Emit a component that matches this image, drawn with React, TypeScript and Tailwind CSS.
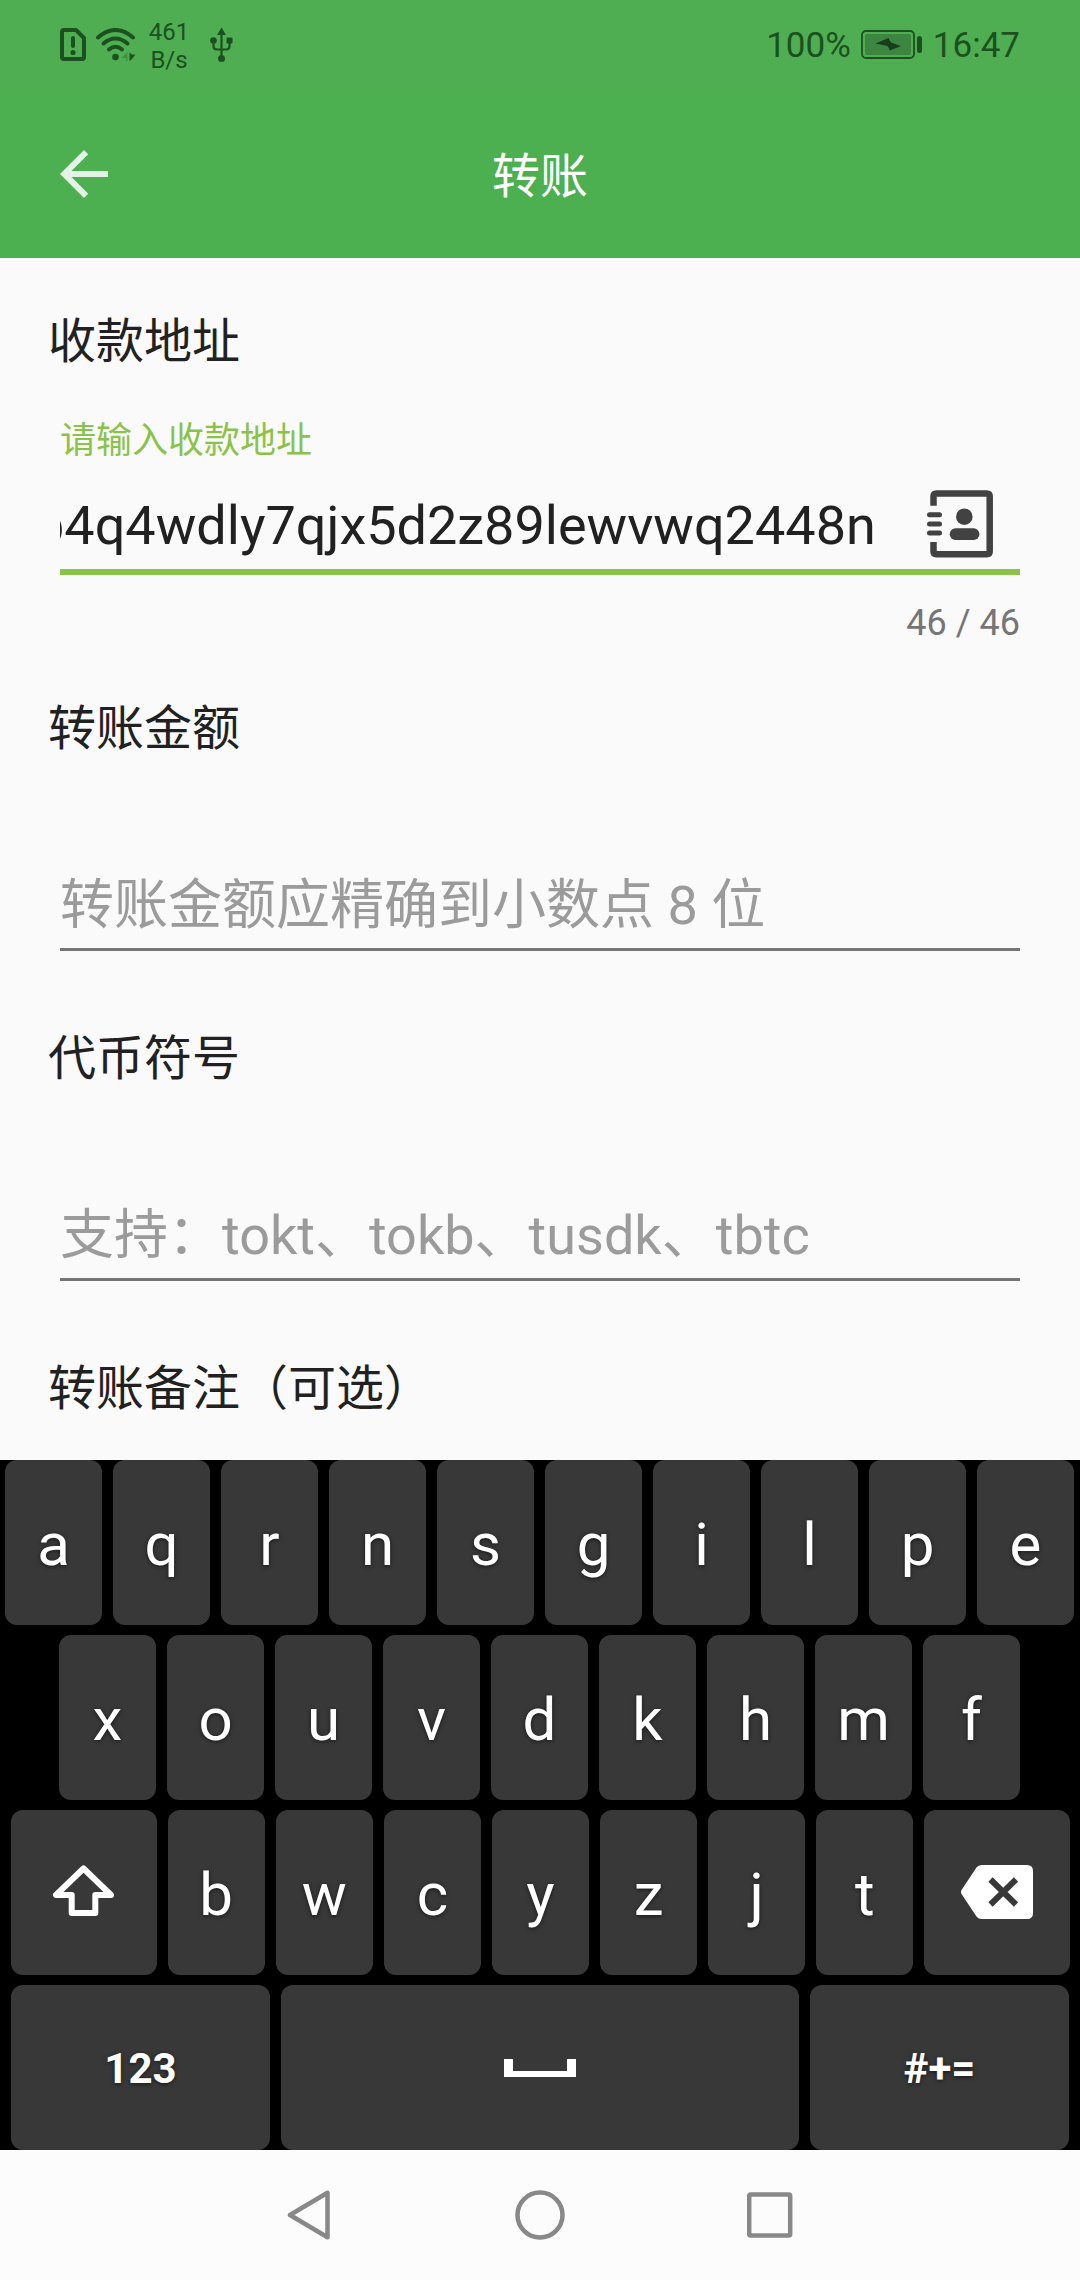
import { useLayoutEffect, useRef } from "react";
import type { ReactNode } from "react";

const fieldText =
  "h-[84px] min-w-0 flex-1 bg-transparent text-[54px] leading-[84px] text-[#212121] outline-none placeholder:text-[#9b9b9b] placeholder:opacity-100";

function StatusBar() {
  return (
    <div className="flex h-[90px] items-center justify-between bg-[#4fae52] px-[60px] text-[#1c511f]">
      <div className="flex items-center">
        <svg className="h-[34px] w-[26px]" viewBox="0 0 26 34" aria-hidden="true">
          <path d="M4 2H16L24 10V29Q24 31 22 31H4Q2 31 2 29V4Q2 2 4 2Z" fill="none" stroke="currentColor" strokeWidth="4" strokeLinejoin="round" />
          <path d="M13 10V18" stroke="currentColor" strokeWidth="4" strokeLinecap="round" />
          <circle cx="13" cy="24.500" r="2.600" fill="currentColor" />
        </svg>
        <svg className="ml-[10px] h-[34px] w-[40px]" viewBox="0 0 40 34" aria-hidden="true">
          <g fill="none" stroke="currentColor" strokeWidth="4" strokeLinecap="round">
            <path d="M2 9.500Q19.500 -5.500 37 9.500" />
            <path d="M7.500 15.500Q19.500 5.500 31.500 15.500" />
            <path d="M13 21.500Q19.500 16 26 21.500" />
          </g>
          <circle cx="19.500" cy="29" r="3.300" fill="currentColor" />
          <path d="M31.500 24V33H30V30H25.500Z" fill="#3a9140" />
          <path d="M33.500 24L35.500 26.500H39.500L35.500 31.500L33.500 33Z" fill="currentColor" />
        </svg>
        <div className="ml-[12px] w-[42px] pt-[2px] text-center text-[24px] leading-[28px]">
          461
          <br />
          B/s
        </div>
        <svg className="ml-[20px] h-[36px] w-[23px]" viewBox="0 0 23 36" aria-hidden="true">
          <g fill="none" stroke="currentColor" strokeWidth="2.200">
            <path d="M11.500 6V32M3.500 13V19Q3.500 22.500 7 22.500H16Q19.500 22.500 19.500 19V13" />
          </g>
          <path d="M11.500 0.500L16 8H7Z" fill="currentColor" />
          <circle cx="3.500" cy="13.500" r="3.300" fill="currentColor" />
          <rect x="16.500" y="10.500" width="6" height="6" rx="1" fill="currentColor" />
          <circle cx="11.500" cy="31.500" r="3.500" fill="currentColor" />
        </svg>
      </div>
      <div className="flex items-center text-[35px] leading-[42px]">
        <span className="pt-[2px]">100%</span>
        <svg className="mx-[10px] h-[30px] w-[62px]" viewBox="0 0 62 30" aria-hidden="true">
          <rect x="1" y="1" width="52" height="27" rx="4" fill="none" stroke="currentColor" strokeWidth="1.800" />
          <rect x="4" y="4" width="46" height="21" rx="2" fill="#3d8641" />
          <path d="M14.500 13.500L27.500 8L30 12.500L40 16L29 20.500L26.500 16Z" fill="#173f19" />
          <rect x="56" y="6" width="5" height="17" rx="2.500" fill="currentColor" />
        </svg>
        <span className="pt-[2px]">16:47</span>
      </div>
    </div>
  );
}

function Toolbar() {
  return (
    <div className="grid h-[168px] grid-cols-[72px_1fr_72px] items-center px-12">
      <button type="button" aria-label="返回" className="text-[#e4f3e5]">
        <svg className="size-[72px]" viewBox="0 0 24 24" fill="currentColor" aria-hidden="true">
          <path d="M20 11H7.830l5.590-5.590L12 4l-8 8 8 8 1.410-1.410L7.830 13H20v-2z" />
        </svg>
      </button>
      <h1 className="pt-[6px] text-center text-[48px] leading-[72px] text-white">转账</h1>
    </div>
  );
}

function AddressBookIcon() {
  return (
    <svg className="h-[68px] w-[67px]" viewBox="0 0 67 68" aria-hidden="true">
      <path
        d="M6.500 15.700V6.500Q6.500 3.500 9.500 3.500H59.700Q62.700 3.500 62.700 6.500V61.300Q62.700 64.300 59.700 64.300H9.500Q6.500 64.300 6.500 61.300V52"
        fill="none"
        stroke="#424242"
        strokeWidth="6.500"
      />
      <path d="M2.500 24.700H12.500M2.500 34H12.500M2.500 43H12.500" stroke="#424242" strokeWidth="5" strokeLinecap="round" />
      <circle cx="37.300" cy="26.700" r="8.300" fill="#424242" />
      <rect x="22.700" y="38.300" width="29.700" height="11.700" rx="5.800" fill="#424242" />
    </svg>
  );
}

function AddressField() {
  const ref = useRef<HTMLInputElement>(null);
  // Keep the end of a long address in view.
  useLayoutEffect(() => {
    const el = ref.current;
    if (el) el.scrollLeft = el.scrollWidth;
  }, []);
  return (
    <div className="px-3">
      <label htmlFor="address" className="mt-9 block text-[36px] leading-[54px] text-[#8bc34a]">
        请输入收款地址
      </label>
      <div className="mt-[17px] flex items-center border-b-[6px] border-[#8bc34a] pr-[26px]">
        <input id="address" ref={ref} type="text" defaultValue="p4q4wdly7qjx5d2z89lewvwq2448n" className={`${fieldText} pb-[2px]`} />
        <button type="button" aria-label="地址簿" className="mb-[6px] ml-[51px] shrink-0">
          <AddressBookIcon />
        </button>
      </div>
      <div className="mt-6 text-right text-[36px] leading-[48px] text-[#757575]">46 / 46</div>
    </div>
  );
}

function PlainField({ id, placeholder }: { id: string; placeholder: string }) {
  return (
    <div className="mx-3 mt-[99px] mb-[72px] flex border-b-[3px] border-[#757575]">
      <input id={id} type="text" placeholder={placeholder} className={fieldText} />
    </div>
  );
}

function Heading({ htmlFor, children }: { htmlFor?: string; children: ReactNode }) {
  return (
    <label htmlFor={htmlFor} className="block text-[48px] leading-[72px] text-[#212121]">
      {children}
    </label>
  );
}

const keyBase =
  "flex h-[165px] min-w-0 items-center justify-center rounded-[12px] bg-[#383838] text-white [text-shadow:0_1px_4px_rgba(0,0,0,0.6)]";

function Letters({ keys }: { keys: string }) {
  return keys.split("").map((k) => (
    <button key={k} type="button" className={`${keyBase} flex-1 pt-1 text-[60px] leading-[70px]`}>
      {k}
    </button>
  ));
}

function Keyboard() {
  return (
    <div className="flex flex-col gap-[10px] bg-black">
      <div className="flex gap-[11px] pr-[6px] pl-[5px]">
        <Letters keys="aqrnsgilpe" />
      </div>
      <div className="flex gap-[11px] pr-[60px] pl-[59px]">
        <Letters keys="xouvdkhmf" />
      </div>
      <div className="flex gap-[11px] pr-[10px] pl-[11px]">
        <button type="button" aria-label="Shift" className={`${keyBase} flex-[1.5]`}>
          <svg className="mb-[5px] h-[53px] w-[63px]" viewBox="0 0 63 53" aria-hidden="true">
            <path d="M31.500 4.500L4 31H19.700V49H43.300V31H59Z" fill="none" stroke="white" strokeWidth="6" strokeLinejoin="round" />
          </svg>
        </button>
        <Letters keys="bwcyzjt" />
        <button type="button" aria-label="Backspace" className={`${keyBase} flex-[1.5]`}>
          <svg className="mb-[2px] h-[54px] w-[72px]" viewBox="0 0 72 54" aria-hidden="true">
            <path d="M20.500 0H66Q72 0 72 6V48Q72 54 66 54H20.500Q17.500 54 15.500 51.500L0.500 29Q-0.500 27 0.500 25L15.500 2.500Q17.500 0 20.500 0Z" fill="white" />
            <path d="M29.500 14.500L55 39.500M55 14.500L29.500 39.500" stroke="#383838" strokeWidth="6" />
          </svg>
        </button>
      </div>
      <div className="flex gap-[11px] px-[11px]">
        <button type="button" className={`${keyBase} flex-1 pt-[2px] text-[42px] font-bold`}>
          123
        </button>
        <button type="button" aria-label="Space" className={`${keyBase} flex-[2]`}>
          <svg className="h-[18px] w-[72px]" viewBox="0 0 72 18" aria-hidden="true">
            <path d="M0 0H9V12H63V0H72V18H0Z" fill="white" />
          </svg>
        </button>
        <button type="button" className={`${keyBase} flex-1 pt-[2px] text-[42px] font-bold`}>
          #+=
        </button>
      </div>
    </div>
  );
}

function NavBar() {
  return (
    <nav className="flex h-[130px] items-center justify-center gap-[182px] bg-[#fcfcfc]">
      <button type="button" aria-label="Back">
        <svg className="size-[50px]" viewBox="0 0 50 50" fill="none" stroke="#888" strokeWidth="4.500" strokeLinejoin="round" aria-hidden="true">
          <path d="M44.500 2.800V47.200L7 25Z" />
        </svg>
      </button>
      <button type="button" aria-label="Home">
        <svg className="size-[50px]" viewBox="0 0 50 50" fill="none" stroke="#888" strokeWidth="4.500" aria-hidden="true">
          <circle cx="25" cy="25" r="22.500" />
        </svg>
      </button>
      <button type="button" aria-label="Recents">
        <svg className="size-[50px]" viewBox="0 0 50 50" fill="none" stroke="#888" strokeWidth="4.500" aria-hidden="true">
          <rect x="2.200" y="4.500" width="41" height="41" rx="1.500" />
        </svg>
      </button>
    </nav>
  );
}

export default function App() {
  return (
    <div className="flex min-h-screen flex-col bg-[#fafafa] font-['Roboto','Noto_Sans_CJK_SC',sans-serif]" lang="zh-CN">
      <header className="bg-[#4caf50]">
        <StatusBar />
        <Toolbar />
      </header>
      <main className="flex-1 px-12 pt-12 pb-[35px]">
        <Heading htmlFor="address">收款地址</Heading>
        <AddressField />
        <div className="mt-[46px]">
          <Heading htmlFor="amount">转账金额</Heading>
        </div>
        <PlainField id="amount" placeholder="转账金额应精确到小数点 8 位" />
        <Heading htmlFor="symbol">代币符号</Heading>
        <PlainField id="symbol" placeholder="支持：tokt、tokb、tusdk、tbtc" />
        <Heading>转账备注（可选）</Heading>
      </main>
      <Keyboard />
      <NavBar />
    </div>
  );
}
